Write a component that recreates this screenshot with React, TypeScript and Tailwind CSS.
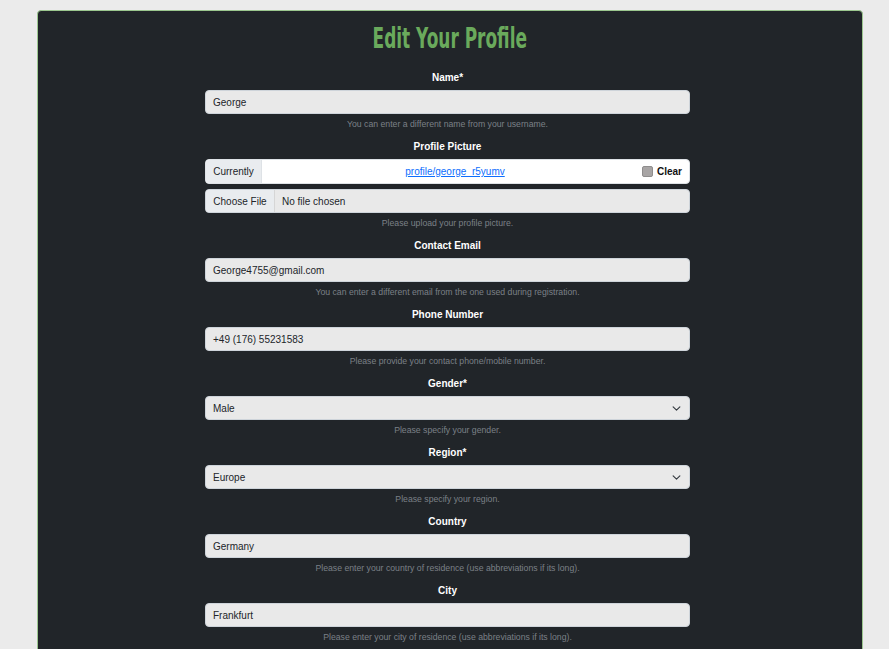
import React from 'react';

type Field = {
  label: string;
  value: string;
  help: string;
  select?: boolean;
};

const fieldsTop: Field[] = [
  { label: 'Name*', value: 'George', help: 'You can enter a different name from your username.' },
];

const fieldsBottom: Field[] = [
  { label: 'Contact Email', value: 'George4755@gmail.com', help: 'You can enter a different email from the one used during registration.' },
  { label: 'Phone Number', value: '+49 (176) 55231583', help: 'Please provide your contact phone/mobile number.' },
  { label: 'Gender*', value: 'Male', help: 'Please specify your gender.', select: true },
  { label: 'Region*', value: 'Europe', help: 'Please specify your region.', select: true },
  { label: 'Country', value: 'Germany', help: 'Please enter your country of residence (use abbreviations if its long).' },
  { label: 'City', value: 'Frankfurt', help: 'Please enter your city of residence (use abbreviations if its long).' },
];

function Label({ children }: { children: React.ReactNode }) {
  return <div className="pt-[2px] text-center text-[10px] leading-[12px] font-bold text-white">{children}</div>;
}

function Help({ children }: { children: React.ReactNode }) {
  return <div className="text-center text-[8.7px] leading-[12px] text-[#7b8087]">{children}</div>;
}

function Chevron() {
  return (
    <svg width="9" height="9" viewBox="0 0 16 16" fill="none" stroke="#343a40" strokeWidth="2" strokeLinecap="round" strokeLinejoin="round">
      <path d="M2 5l6 6 6-6" />
    </svg>
  );
}

function FieldGroup({ f }: { f: Field }) {
  return (
    <div className="pb-[9px]">
      <Label>{f.label}</Label>
      <div className="mt-[6px] h-[24px] flex items-center justify-between rounded-[4px] border border-[#ced4da] bg-[#e9e9e9] pl-[7px] pr-[8px] text-[10px] text-[#212529]">
        <span>{f.value}</span>
        {f.select && <Chevron />}
      </div>
      <div className="mt-[4px]">
        <Help>{f.help}</Help>
      </div>
    </div>
  );
}

export default function App() {
  return (
    <div className="min-h-[649px] bg-[#ebebeb] pt-[10px] font-['Liberation_Sans',Arial,sans-serif]">
      <div className="ml-[37px] w-[826px] min-h-[700px] rounded-t-[4px] border border-[#9cc78f] bg-[#212529] pt-[9px]">
        <h1 className="h-[36px] flex justify-center items-center mb-[14px]">
          <span className="inline-block scale-x-[0.65] text-[29px] leading-[36px] font-bold text-[#6aaa5c] font-['DejaVu_Sans_Condensed','DejaVu_Sans',sans-serif]">
            Edit Your Profile
          </span>
        </h1>
        <div className="ml-[167px] w-[485px]">
          {fieldsTop.map((f) => (
            <FieldGroup key={f.label} f={f} />
          ))}

          <div className="pb-[9px]">
            <Label>Profile Picture</Label>
            <div className="mt-[6px] h-[25px] flex rounded-[4px] border border-[#dee2e6] bg-white text-[10px] overflow-hidden">
              <div className="w-[56px] flex items-center justify-center bg-[#e9ecef] border-r border-[#dee2e6] text-[#212529]">
                Currently
              </div>
              <div className="flex-1 flex items-center justify-center">
                <a className="text-[#0d6efd] underline ml-[10px]">profile/george_r5yumv</a>
              </div>
              <div className="flex items-center gap-[4px] pr-[7px] pl-[4px]">
                <span className="w-[11px] h-[11px] rounded-[2px] bg-[#a8a5a5] border border-[#8f8d8d]" />
                <span className="font-bold text-[#111]">Clear</span>
              </div>
            </div>
            <div className="mt-[5px] h-[24px] flex rounded-[4px] border border-[#ced4da] bg-[#e9e9e9] text-[10px] text-[#212529] overflow-hidden">
              <div className="w-[69px] flex items-center justify-center bg-[#e9ecef] border-r border-[#d6d6d6]">
                Choose File
              </div>
              <div className="flex items-center pl-[7px]">No file chosen</div>
            </div>
            <div className="mt-[4px]">
              <Help>Please upload your profile picture.</Help>
            </div>
          </div>

          {fieldsBottom.map((f) => (
            <FieldGroup key={f.label} f={f} />
          ))}
        </div>
      </div>
    </div>
  );
}
